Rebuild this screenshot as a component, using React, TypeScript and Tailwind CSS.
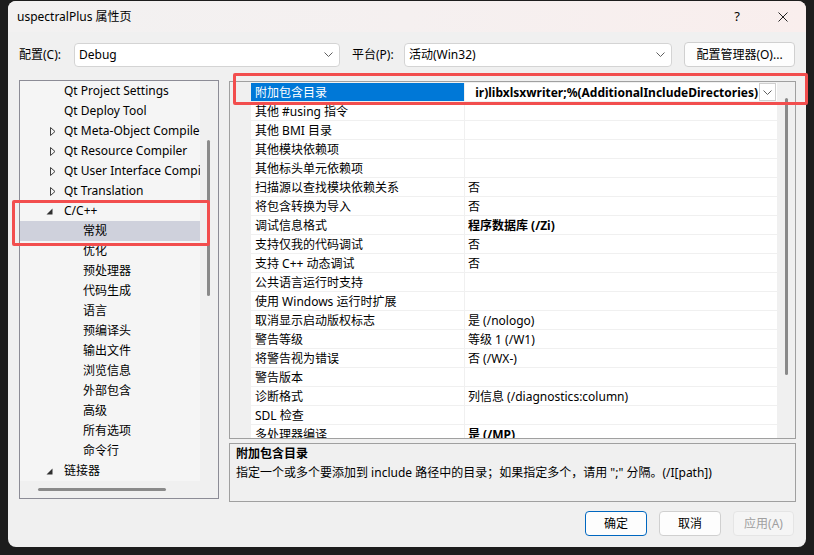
import React from "react";

const FONT = "font-['Noto_Sans','Noto_Sans_CJK_SC',sans-serif]";

type TreeItem = {
  label: string;
  level: 0 | 1;
  arrow?: "closed" | "open";
  selected?: boolean;
};

const treeItems: TreeItem[] = [
  { label: "Qt Project Settings", level: 0 },
  { label: "Qt Deploy Tool", level: 0 },
  { label: "Qt Meta-Object Compiler", level: 0, arrow: "closed" },
  { label: "Qt Resource Compiler", level: 0, arrow: "closed" },
  { label: "Qt User Interface Compiler", level: 0, arrow: "closed" },
  { label: "Qt Translation", level: 0, arrow: "closed" },
  { label: "C/C++", level: 0, arrow: "open" },
  { label: "常规", level: 1, selected: true },
  { label: "优化", level: 1 },
  { label: "预处理器", level: 1 },
  { label: "代码生成", level: 1 },
  { label: "语言", level: 1 },
  { label: "预编译头", level: 1 },
  { label: "输出文件", level: 1 },
  { label: "浏览信息", level: 1 },
  { label: "外部包含", level: 1 },
  { label: "高级", level: 1 },
  { label: "所有选项", level: 1 },
  { label: "命令行", level: 1 },
  { label: "链接器", level: 0, arrow: "open" },
];

type Prop = { name: string; value: string; bold?: boolean; selected?: boolean };

const props: Prop[] = [
  { name: "附加包含目录", value: "ir)libxlsxwriter;%(AdditionalIncludeDirectories)", bold: true, selected: true },
  { name: "其他 #using 指令", value: "" },
  { name: "其他 BMI 目录", value: "" },
  { name: "其他模块依赖项", value: "" },
  { name: "其他标头单元依赖项", value: "" },
  { name: "扫描源以查找模块依赖关系", value: "否" },
  { name: "将包含转换为导入", value: "否" },
  { name: "调试信息格式", value: "程序数据库 (/Zi)", bold: true },
  { name: "支持仅我的代码调试", value: "否" },
  { name: "支持 C++ 动态调试", value: "否" },
  { name: "公共语言运行时支持", value: "" },
  { name: "使用 Windows 运行时扩展", value: "" },
  { name: "取消显示启动版权标志", value: "是 (/nologo)" },
  { name: "警告等级", value: "等级 1 (/W1)" },
  { name: "将警告视为错误", value: "否 (/WX-)" },
  { name: "警告版本", value: "" },
  { name: "诊断格式", value: "列信息 (/diagnostics:column)" },
  { name: "SDL 检查", value: "" },
  { name: "多处理器编译", value: "是 (/MP)", bold: true },
];

function Chevron({ className = "" }: { className?: string }) {
  return (
    <svg width="9" height="5" viewBox="0 0 9 5" className={className}>
      <polyline points="0.5,0.5 4.5,4.5 8.5,0.5" fill="none" stroke="#5f5f5f" strokeWidth="1" />
    </svg>
  );
}

function Select({ value, width }: { value: string; width: string }) {
  return (
    <div className={`${width} h-[24px] flex items-center justify-between bg-white border border-[#d4d4d4] rounded-[4px] pl-[4px] pr-[6px]`}>
      <span>{value}</span>
      <Chevron />
    </div>
  );
}

function TreeRow({ item }: { item: TreeItem }) {
  return (
    <div className={`h-[20px] flex items-center whitespace-nowrap ${item.selected ? "bg-[#cfd1dc]" : ""}`}>
      <div className={item.level === 0 ? "w-[44px] flex justify-end pr-[8px] shrink-0" : "w-[63px] shrink-0"}>
        {item.level === 0 && item.arrow === "closed" && (
          <svg width="6" height="9" viewBox="0 0 6 9">
            <polygon points="0.5,0.5 5,4.5 0.5,8.5" fill="none" stroke="#404040" strokeWidth="1" />
          </svg>
        )}
        {item.level === 0 && item.arrow === "open" && (
          <svg width="7" height="7" viewBox="0 0 7 7" className="mr-[3px]">
            <polygon points="6.5,0.5 6.5,6.5 0.5,6.5" fill="#303030" />
          </svg>
        )}
      </div>
      <span className="text-black">{item.label}</span>
    </div>
  );
}

function PropRow({ p }: { p: Prop }) {
  return (
    <div className="h-[19px] flex border-b border-[#f0f0f0] bg-white shrink-0">
      <div
        className={`w-[214px] shrink-0 pl-[4px] pt-[2px] flex items-center whitespace-nowrap overflow-hidden border-r border-[#f0f0f0] ${
          p.selected ? "bg-[#0078d7] text-white" : "text-black"
        }`}
      >
        {p.name}
      </div>
      {p.selected ? (
        <div className="flex-1 flex items-center min-w-0">
          <div className="flex-1 min-w-0 overflow-hidden flex justify-end whitespace-nowrap font-bold pr-[1px] pt-[2px]">
            <span>{p.value}</span>
          </div>
          <div className="w-[17px] h-[18px] shrink-0 bg-white border border-[#cfcfcf] flex items-center justify-center mr-[1px]">
            <Chevron />
          </div>
        </div>
      ) : (
        <div className={`flex-1 pl-[3px] pt-[2px] flex items-center whitespace-nowrap ${p.bold ? "font-bold" : ""}`}>{p.value}</div>
      )}
    </div>
  );
}

export default function App() {
  return (
    <div className={`relative w-[814px] h-[555px] bg-[#1d1d1d] overflow-hidden text-[12px] leading-none text-black ${FONT}`}>
      <div className="pl-[8px] pt-[1px]">
        <div className="w-[798px] h-[546px] rounded-[8px] overflow-hidden bg-[#f0f0f0] flex flex-col">
          {/* title bar */}
          <div className="h-[31px] flex items-center bg-gradient-to-r from-[#f2f1f1] via-[#f5f0f0] to-[#f9eeed] shrink-0">
            <span className="pl-[9px]">uspectralPlus 属性页</span>
            <div className="ml-auto flex h-full">
              <div className="w-[46px] flex items-center justify-center text-[13px]">?</div>
              <div className="w-[46px] flex items-center justify-center">
                <svg width="10" height="10" viewBox="0 0 10 10">
                  <path d="M0.5 0.5 L9.5 9.5 M9.5 0.5 L0.5 9.5" stroke="#222" strokeWidth="1" />
                </svg>
              </div>
            </div>
          </div>

          {/* config row */}
          <div className="mt-[10px] h-[25px] flex items-center pl-[11px] shrink-0">
            <span className="w-[55px]">配置(C):</span>
            <Select value="Debug" width="w-[266px]" />
            <span className="ml-[12px] w-[52px]">平台(P):</span>
            <Select value="活动(Win32)" width="w-[268px]" />
            <div className="ml-[12px] w-[111px] h-[25px] flex items-center justify-center bg-[#fdfdfd] border border-[#d0d0d0] rounded-[4px]">
              配置管理器(O)...
            </div>
          </div>

          {/* main */}
          <div className="mt-[13px] flex items-start pl-[11px] gap-[10px]">
            {/* tree */}
            <div className="w-[200px] h-[419px] border border-[#8c8c96] flex flex-col shrink-0">
              <div className="flex flex-1 min-h-0">
                <div className="w-[180px] overflow-hidden bg-[#f5f5f5]">
                  {treeItems.map((it) => (
                    <TreeRow key={it.label} item={it} />
                  ))}
                </div>
                <div className="flex-1 bg-[#f0f0f0] pl-[7px] pt-[59px]">
                  <div className="w-[3px] h-[156px] bg-[#8a8a8a] rounded-full" />
                </div>
              </div>
              <div className="h-[17px] bg-[#f0f0f0] pl-[18px] pt-[7px] shrink-0">
                <div className="w-[128px] h-[3px] bg-[#8a8a8a] rounded-full" />
              </div>
            </div>

            {/* right column */}
            <div className="flex flex-col gap-[4px] pt-[1px]">
              <div className="w-[567px] h-[358px] border border-[#a0a0a0] flex bg-[#f0f0f0]">
                <div className="w-[21px] shrink-0" />
                <div className="w-[526px] flex flex-col overflow-hidden pt-[1px]">
                  {props.map((p) => (
                    <PropRow key={p.name} p={p} />
                  ))}
                </div>
                <div className="flex-1 pl-[8px] pt-[16px]">
                  <div className="w-[3px] h-[277px] bg-[#8a8a8a] rounded-full" />
                </div>
              </div>
              <div className="w-[567px] h-[59px] border border-[#a0a0a0] bg-[#f0f0f0] pl-[6px] leading-[19px]">
                <div className="font-bold">附加包含目录</div>
                <div>指定一个或多个要添加到 include 路径中的目录；如果指定多个，请用 ";" 分隔。(/I[path])</div>
              </div>
            </div>
          </div>

          {/* buttons */}
          <div className="mt-[9px] flex justify-end gap-[12px] pr-[12px]">
            <div className="w-[62px] h-[25px] flex items-center justify-center bg-[#fdfdfd] border border-[#0067c0] rounded-[4px]">确定</div>
            <div className="w-[62px] h-[25px] flex items-center justify-center bg-[#fdfdfd] border border-[#d0d0d0] rounded-[4px]">取消</div>
            <div className="w-[61px] h-[25px] flex items-center justify-center bg-[#f5f5f5] border border-[#e5e5e5] rounded-[4px] text-[#a0a0a0]">应用(A)</div>
          </div>
        </div>
      </div>

      {/* annotation boxes */}
      <div className="absolute left-[12px] top-[200px] w-[198px] h-[46px] border-[3px] border-[#f24e4e] rounded-[2px]" />
      <div className="absolute left-[233px] top-[73px] w-[575px] h-[32px] border-[3px] border-[#f24e4e] rounded-[2px]" />
    </div>
  );
}
